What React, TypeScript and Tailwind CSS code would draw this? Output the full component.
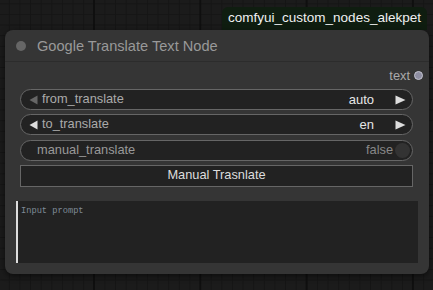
import React from 'react';

// litegraph-ish combo widget row
interface ComboProps {
    label: string;
    value: string;
    leftDisabled?: boolean;
}

const Combo: React.FC<ComboProps> = ({ label, value, leftDisabled }) => {
    return (
        <div className="flex items-center h-[21px] rounded-full border border-[#666] bg-[#222] pl-[8px] pr-[6px]">
            <svg width="9" height="10" viewBox="0 0 9 10" className="shrink-0">
                <polygon points="8.5,0.5 8.5,9.5 0.5,5" fill={leftDisabled ? '#666' : '#ddd'} />
            </svg>
            <span className="ml-[4px] text-[12.8px] text-[#aaa] leading-none">{label}</span>
            <span className="ml-auto text-[13px] text-[#e6e6e6] leading-none">{value}</span>
            <svg width="11" height="10" viewBox="0 0 11 10" className="shrink-0 ml-[21px]">
                <polygon points="0.5,0.5 0.5,9.5 10.5,5" fill="#ddd" />
            </svg>
        </div>
    );
};

const App: React.FC = () => {
    return (
        <div
            className="w-[433px] h-[290px] overflow-hidden flex flex-col bg-[#1b1b1b] bg-[linear-gradient(to_right,#0f0f0f_2px,transparent_2px),linear-gradient(to_right,#151515_1px,transparent_1px),linear-gradient(to_bottom,#151515_1px,transparent_1px)] bg-[size:106.3px_100%,10.63px_10.63px,10.63px_10.63px] bg-[position:93px_0,8.8px_3.3px,8.8px_3.3px] pt-[7px]"
            style={{ fontFamily: '"Liberation Sans", Arial, sans-serif' }}
        >
            {/* badge */}
            <div className="self-end mr-[6px] w-[205px] h-[23px] rounded-t-[6px] bg-[#0f1d10] flex items-center justify-center text-[13.5px] text-[#f0f0f0] leading-none pb-[1px]">
                comfyui_custom_nodes_alekpet
            </div>

            {/* node */}
            <div className="ml-[5px] w-[424px] h-[244px] rounded-[8px] bg-[#353535] shadow-[0_2px_6px_rgba(0,0,0,0.55)] flex flex-col">
                <div className="h-[32px] flex items-center border-b border-[#2c2c2c] pl-[11px]">
                    <div className="w-[10px] h-[10px] rounded-full bg-[#666]" />
                    <span className="ml-[11px] text-[14.6px] text-[#999] leading-none mt-[1px]">Google Translate Text Node</span>
                </div>

                <div className="h-[27px] flex items-center justify-end pr-[6px]">
                    <span className="text-[12.8px] text-[#aaa] leading-none mt-[1px]">text</span>
                    <div className="ml-[4px] w-[9px] h-[9px] rounded-full bg-[#8e8ea2] border border-[#c5c5d0]" />
                </div>

                <div className="flex flex-col gap-[4.3px] pl-[15px] pr-[16px]">
                    <Combo label="from_translate" value="auto" leftDisabled />
                    <Combo label="to_translate" value="en" />
                    <div className="flex items-center h-[21px] rounded-full border border-[#666] bg-[#222] pl-[16px] pr-[2px]">
                        <span className="text-[12.8px] text-[#999] leading-none">manual_translate</span>
                        <span className="ml-auto text-[12.8px] text-[#888] leading-none">false</span>
                        <div className="ml-[2px] w-[15px] h-[15px] rounded-full bg-[#333]" />
                    </div>
                    <div className="h-[22px] border border-[#666] bg-[#222] flex items-center justify-center text-[12.8px] text-[#ddd] leading-none">
                        Manual Trasnlate
                    </div>
                </div>

                <div
                    className="mt-[14px] mx-[11px] h-[62px] bg-[#222] border-l-2 border-[#ddd] pl-[3px] pt-[5px] text-[8.7px] leading-[10px] text-[#7f8a96]"
                    style={{ fontFamily: '"Liberation Mono", "Courier New", monospace' }}
                >
                    Input prompt
                </div>
            </div>
        </div>
    );
};

export default App;
